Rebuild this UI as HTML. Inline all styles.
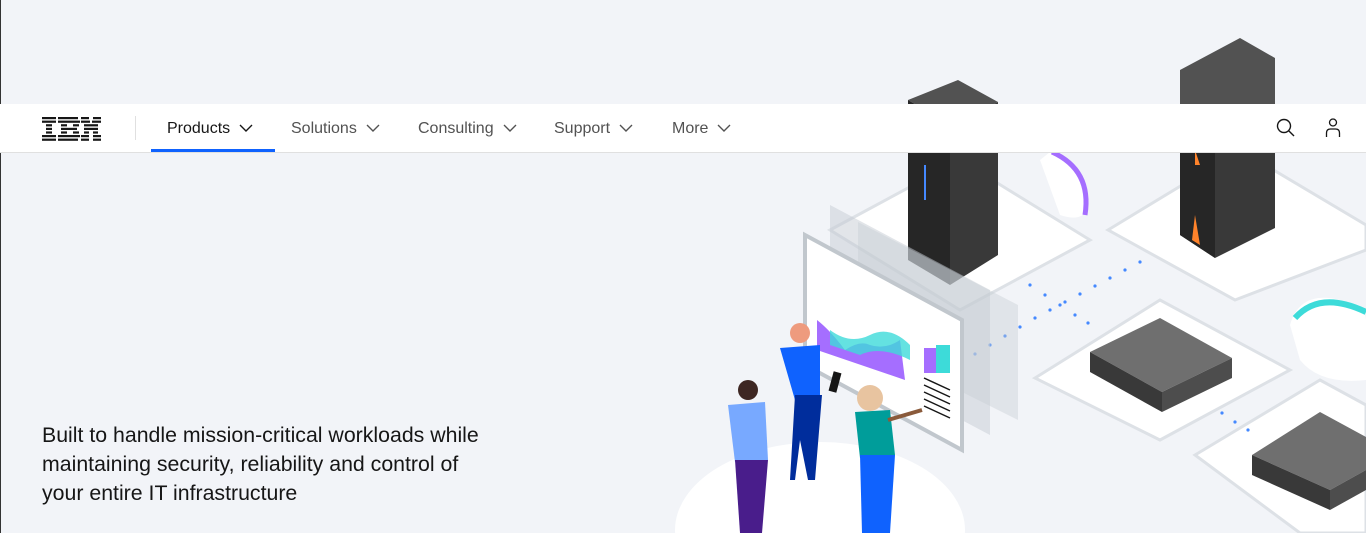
<!DOCTYPE html>
<html style="overflow:hidden;width:1366px;height:533px"><head><meta charset="utf-8"><style>
*{margin:0;padding:0;box-sizing:border-box}
body{width:1366px;height:533px;overflow:hidden;background:#f2f4f8;font-family:"Liberation Sans",sans-serif;position:relative}
#edge{position:absolute;left:0;top:0;width:1px;height:533px;background:#333}
#art{position:absolute;left:0;top:0}
nav{position:absolute;left:0;top:104px;width:1366px;height:49px;background:#fff;border-bottom:1px solid #e0e0e0}
.logo{position:absolute;left:42px;top:13px}
.sep{position:absolute;left:135px;top:12px;width:1px;height:24px;background:#e0e0e0}
.item{position:absolute;top:0;height:48px;line-height:50px;font-size:16px;color:#525252}
.item svg{margin-left:9px;vertical-align:0px}
.act{color:#161616}
.ul{position:absolute;left:151px;top:45px;width:124px;height:3px;background:#0f62fe}
h1{position:absolute;left:42px;top:421px;font-size:21.3px;font-weight:400;line-height:29px;color:#161616;width:455px}
</style></head><body>
<svg id="art" width="1366" height="533" viewBox="0 0 1366 533">
<polygon points="830,230 960,160 1090,240 960,310" fill="#fff" stroke="#dde1e6" stroke-width="3"/>
<polygon points="1108,230 1240,150 1366,225 1366,250 1235,300" fill="#fff" stroke="#dde1e6" stroke-width="3"/>
<polygon points="1035,378 1160,300 1290,370 1160,440" fill="#fff" stroke="#dde1e6" stroke-width="3"/>
<polygon points="1195,455 1320,380 1366,405 1366,533 1300,533" fill="#fff" stroke="#dde1e6" stroke-width="3"/>
<path d="M1050,152 Q1090,165 1088,210 Q1080,222 1060,215 L1040,160Z" fill="#fff"/>
<path d="M1052,152 Q1092,170 1085,215" fill="none" stroke="#a56eff" stroke-width="5"/>
<path d="M1290,325 Q1300,290 1340,300 Q1366,305 1366,320 L1366,380 Q1320,385 1300,360Z" fill="#fff"/>
<path d="M1295,318 Q1320,290 1366,312" fill="none" stroke="#3ddbd9" stroke-width="6"/>
<g fill="#4589ff">
<circle cx="1030" cy="285" r="1.6"/><circle cx="1045" cy="295" r="1.6"/><circle cx="1060" cy="305" r="1.6"/><circle cx="1075" cy="315" r="1.6"/><circle cx="1088" cy="323" r="1.6"/>
<circle cx="1140" cy="262" r="1.6"/><circle cx="1125" cy="270" r="1.6"/><circle cx="1110" cy="278" r="1.6"/><circle cx="1095" cy="286" r="1.6"/><circle cx="1080" cy="294" r="1.6"/><circle cx="1065" cy="302" r="1.6"/><circle cx="1050" cy="310" r="1.6"/><circle cx="1035" cy="318" r="1.6"/><circle cx="1020" cy="327" r="1.6"/><circle cx="1005" cy="336" r="1.6"/><circle cx="990" cy="345" r="1.6"/><circle cx="975" cy="354" r="1.6"/>
<circle cx="1222" cy="413" r="1.6"/><circle cx="1235" cy="422" r="1.6"/><circle cx="1248" cy="430" r="1.6"/>
</g>
<polygon points="908,100 958,80 998,102 950,125" fill="#525252"/>
<polygon points="908,100 950,125 950,285 908,260" fill="#262626"/>
<polygon points="950,125 998,102 998,255 950,285" fill="#393939"/>
<line x1="925" y1="165" x2="925" y2="200" stroke="#4589ff" stroke-width="2"/>
<polygon points="1180,70 1240,38 1275,58 1275,104 1180,104" fill="#525252"/>
<polygon points="1180,104 1275,104 1275,228 1215,258 1180,235" fill="#393939"/>
<polygon points="1180,104 1215,104 1215,258 1180,235" fill="#262626"/>
<polygon points="1195,150 1200,165 1195,165" fill="#ff832b"/>
<polygon points="1195,215 1200,245 1192,240" fill="#ff832b"/>
<polygon points="830,205 990,290 990,435 830,350" fill="#c6ccd3" opacity=".5"/>
<polygon points="858,222 1018,305 1018,420 858,340" fill="#c6ccd3" opacity=".4"/>
<polygon points="805,235 962,320 962,450 805,365" fill="#fff" stroke="#c1c7cd" stroke-width="4"/>
<path d="M817,320 Q830,330 845,350 Q860,340 870,345 Q885,350 900,340 L905,380 L817,350Z" fill="#a56eff"/>
<path d="M830,330 Q850,345 870,335 Q890,325 910,345 L910,360 Q880,345 860,355 L830,345Z" fill="#3ddbd9" opacity=".8"/>
<rect x="924" y="348" width="26" height="25" fill="#a56eff"/>
<rect x="936" y="345" width="14" height="28" fill="#3ddbd9"/>
<g stroke="#161616" stroke-width="1.5"><line x1="924" y1="378" x2="950" y2="390"/><line x1="924" y1="385" x2="950" y2="397"/><line x1="924" y1="392" x2="950" y2="404"/><line x1="924" y1="399" x2="950" y2="411"/><line x1="924" y1="406" x2="950" y2="418"/></g>
<polygon points="1090,352 1160,318 1232,358 1162,392" fill="#6f6f6f"/>
<polygon points="1090,352 1162,392 1162,412 1090,372" fill="#393939"/>
<polygon points="1162,392 1232,358 1232,378 1162,412" fill="#4d4d4d"/>
<polygon points="1252,455 1320,412 1366,437 1366,470 1330,490" fill="#6f6f6f"/>
<polygon points="1252,455 1330,490 1330,510 1252,475" fill="#393939"/>
<polygon points="1330,490 1366,470 1366,490 1330,510" fill="#4d4d4d"/>
<ellipse cx="820" cy="530" rx="145" ry="88" fill="#fff"/>
<circle cx="748" cy="390" r="10" fill="#3e2723"/>
<path d="M728,405 L765,402 L768,460 L735,462Z" fill="#78a9ff"/>
<path d="M735,460 L768,460 L762,533 L740,533Z" fill="#491d8b"/>
<circle cx="800" cy="333" r="10" fill="#ee9b7e"/>
<path d="M780,348 L820,345 L820,395 L795,400Z" fill="#0f62fe"/>
<path d="M795,395 L822,395 L815,480 L808,480 L800,440 L795,480 L790,480Z" fill="#002d9c"/>
<rect x="831" y="372" width="8" height="20" fill="#161616" transform="rotate(15 835 382)"/>
<circle cx="870" cy="398" r="13" fill="#e8c4a0"/>
<path d="M855,412 L890,410 L895,455 L860,458Z" fill="#009d9a"/>
<path d="M860,455 L895,455 L890,533 L862,533Z" fill="#0f62fe"/>
<path d="M888,420 L922,410" stroke="#8a5a3b" stroke-width="4"/>
</svg>
<div id="edge"></div>
<nav>
<svg class="logo" width="59" height="24" viewBox="0 0 59 24"><g fill="#161616">
<rect x="0" y="0" width="14" height="2.2"/><rect x="0" y="3.6" width="14" height="2.2"/><rect x="4" y="7.2" width="6" height="2.2"/><rect x="4" y="10.8" width="6" height="2.2"/><rect x="4" y="14.4" width="6" height="2.2"/><rect x="0" y="18" width="14" height="2.2"/><rect x="0" y="21.6" width="14" height="2.2"/>
<rect x="16" y="0" width="20" height="2.2"/><rect x="16" y="3.6" width="22" height="2.2"/><rect x="19" y="7.2" width="6" height="2.2"/><rect x="31" y="7.2" width="6" height="2.2"/><rect x="19" y="10.8" width="16" height="2.2"/><rect x="19" y="14.4" width="6" height="2.2"/><rect x="31" y="14.4" width="6" height="2.2"/><rect x="16" y="18" width="22" height="2.2"/><rect x="16" y="21.6" width="20" height="2.2"/>
<rect x="39" y="0" width="8" height="2.2"/><rect x="51" y="0" width="8" height="2.2"/><rect x="39" y="3.6" width="9" height="2.2"/><rect x="50" y="3.6" width="9" height="2.2"/><rect x="42" y="7.2" width="14" height="2.2"/><rect x="42" y="10.8" width="14" height="2.2"/><rect x="42" y="14.4" width="5" height="2.2"/><rect x="51" y="14.4" width="5" height="2.2"/><rect x="39" y="18" width="8" height="2.2"/><rect x="51" y="18" width="8" height="2.2"/><rect x="39" y="21.6" width="8" height="2.2"/><rect x="51" y="21.6" width="8" height="2.2"/>
</g></svg>
<div class="sep"></div>
<div class="item act" style="left:167px">Products<svg width="14" height="9" viewBox="0 0 14 9"><path d="M1,1 L7,7 L13,1" fill="none" stroke="#161616" stroke-width="1.4"/></svg></div>
<div class="item" style="left:291px">Solutions<svg width="14" height="9" viewBox="0 0 14 9"><path d="M1,1 L7,7 L13,1" fill="none" stroke="#525252" stroke-width="1.4"/></svg></div>
<div class="item" style="left:418px">Consulting<svg width="14" height="9" viewBox="0 0 14 9"><path d="M1,1 L7,7 L13,1" fill="none" stroke="#525252" stroke-width="1.4"/></svg></div>
<div class="item" style="left:554px">Support<svg width="14" height="9" viewBox="0 0 14 9"><path d="M1,1 L7,7 L13,1" fill="none" stroke="#525252" stroke-width="1.4"/></svg></div>
<div class="item" style="left:672px">More<svg width="14" height="9" viewBox="0 0 14 9"><path d="M1,1 L7,7 L13,1" fill="none" stroke="#525252" stroke-width="1.4"/></svg></div>
<div class="ul"></div>
<svg style="position:absolute;left:1276px;top:14px" width="20" height="20" viewBox="0 0 20 20"><circle cx="8" cy="8" r="6.5" fill="none" stroke="#161616" stroke-width="1.4"/><line x1="12.7" y1="12.7" x2="18" y2="18" stroke="#161616" stroke-width="1.4"/></svg>
<svg style="position:absolute;left:1325px;top:14px" width="16" height="20" viewBox="0 0 16 20"><circle cx="8" cy="4.5" r="3.5" fill="none" stroke="#161616" stroke-width="1.3"/><path d="M1.5,19 L1.5,15 Q1.5,11 5.5,11 L10.5,11 Q14.5,11 14.5,15 L14.5,19" fill="none" stroke="#161616" stroke-width="1.3"/></svg>
</nav>
<h1>Built to handle mission-critical workloads while maintaining security, reliability and control of your entire IT infrastructure</h1>
</body></html>
